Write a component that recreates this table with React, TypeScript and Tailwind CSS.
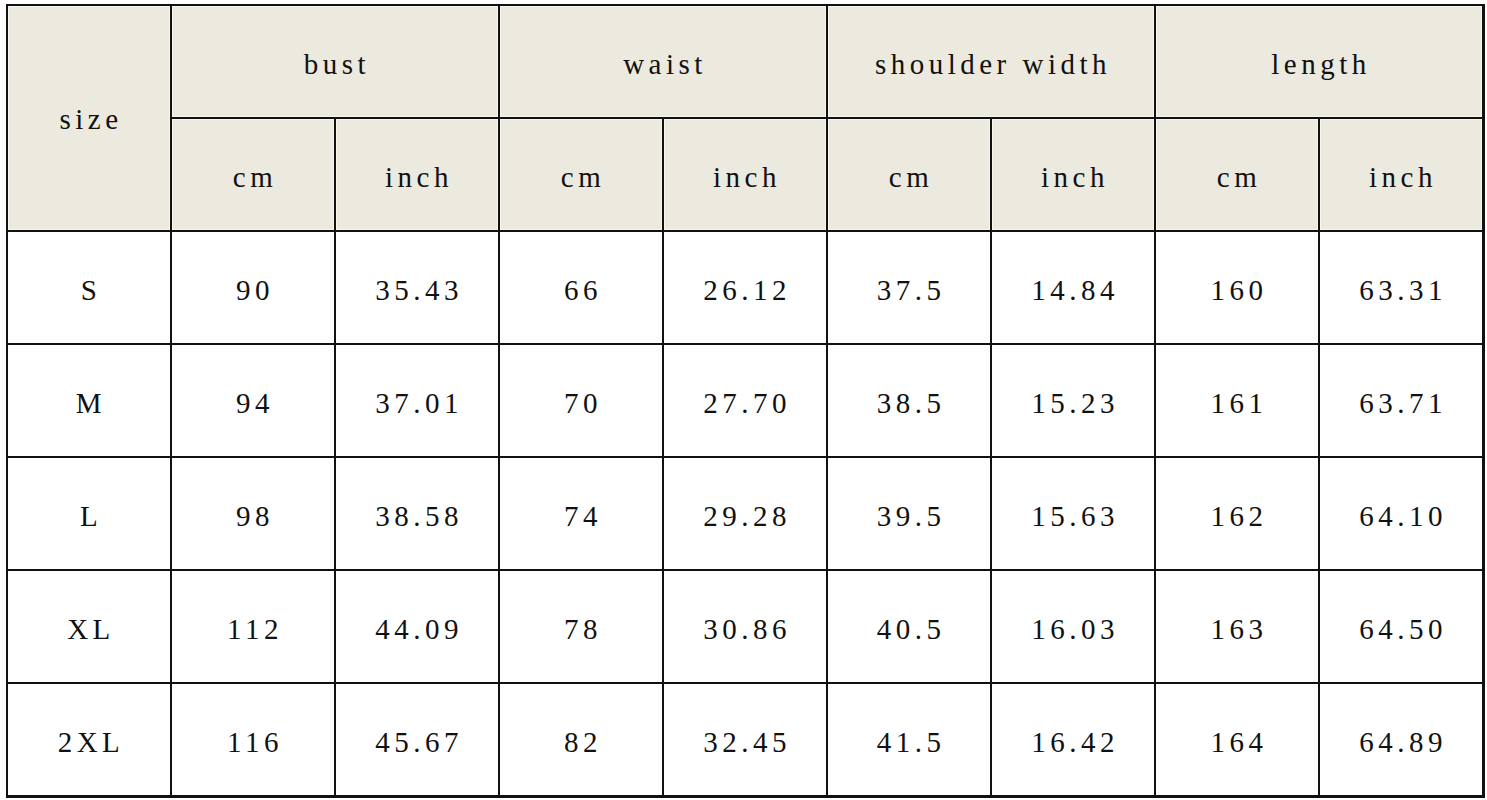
import React from 'react';

const rows = [
  ['S', '90', '35.43', '66', '26.12', '37.5', '14.84', '160', '63.31'],
  ['M', '94', '37.01', '70', '27.70', '38.5', '15.23', '161', '63.71'],
  ['L', '98', '38.58', '74', '29.28', '39.5', '15.63', '162', '64.10'],
  ['XL', '112', '44.09', '78', '30.86', '40.5', '16.03', '163', '64.50'],
  ['2XL', '116', '45.67', '82', '32.45', '41.5', '16.42', '164', '64.89'],
];

const groups = ['bust', 'waist', 'shoulder width', 'length'];

const head = 'bg-[#ece9df] flex items-center justify-center pl-[4px] shadow-[inset_1px_1px_0_#f7f5ee,inset_-1px_-1px_0_#f7f5ee]';
const body = 'bg-white flex items-center justify-center pl-[4px]';

export default function App() {
  return (
    <div className="w-[1487px] h-[800px] bg-white pt-[4px] pl-[6px]">
      <div
        className="grid grid-cols-[repeat(9,162px)] grid-rows-[repeat(7,111px)] gap-[2px] p-[2px] pr-[3px] pb-[3px] bg-[#111] w-fit text-[29px] tracking-[4.5px] text-[#111]"
        style={{ fontFamily: '"Liberation Serif", "Times New Roman", serif' }}
      >
        <div className={`${head} row-span-2 pt-[4px]`}>size</div>
        {groups.map((g) => (
          <div key={g} className={`${head} col-span-2 pt-[6px]`}>
            {g}
          </div>
        ))}
        {groups.map((g) => (
          <React.Fragment key={g + '-u'}>
            <div className={`${head} pt-[6px]`}>cm</div>
            <div className={`${head} pt-[6px]`}>inch</div>
          </React.Fragment>
        ))}
        {rows.map((r) =>
          r.map((v, i) => (
            <div key={r[0] + i} className={`${body} pt-[6px]`}>
              {v}
            </div>
          ))
        )}
      </div>
    </div>
  );
}
